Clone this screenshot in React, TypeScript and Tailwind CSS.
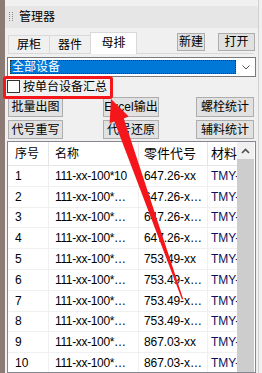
import React from "react";

const rows = [
  ["1", "111-xx-100*10", "647.26-xx"],
  ["2", "111-xx-100*…", "647.26-x…"],
  ["3", "111-xx-100*…", "647.26-x…"],
  ["4", "111-xx-100*…", "647.26-x…"],
  ["5", "111-xx-100*…", "753.49-xx"],
  ["6", "111-xx-100*…", "753.49-x…"],
  ["7", "111-xx-100*…", "753.49-x…"],
  ["8", "111-xx-100*…", "753.49-x…"],
  ["9", "111-xx-100*…", "867.03-xx"],
  ["10", "111-xx-100*…", "867.03-x…"],
];

const btn =
  "h-full flex items-center justify-center bg-[#e1e1e1] border border-[#adadad] leading-none";

function Tab({ label, active }: { label: string; active?: boolean }) {
  if (active) {
    return (
      <div className="h-[22px] -mb-px w-[47px] bg-white border border-b-0 border-[#d9d9d9] flex items-center justify-center pb-[2px]">
        {label}
      </div>
    );
  }
  return (
    <div className="h-[18px] w-[41px] bg-[#f0f0f0] border-t border-l border-[#d9d9d9] flex items-center justify-center">
      {label}
    </div>
  );
}

export default function App() {
  return (
    <div className="relative w-[262px] h-[373px] overflow-hidden bg-[#f0f0f0] flex text-[12px] text-black font-['Liberation_Sans','Noto_Sans_CJK_SC',sans-serif]">
      {/* left window edge */}
      <div className="w-[5px] shrink-0 bg-[#8c7b74]" />

      <div className="w-[253px] shrink-0 flex flex-col">
        {/* title bar */}
        <div className="mt-[6px] h-[22px] bg-[#e6e6e6] rounded-tr-[3px] flex items-center">
          <svg width="4" height="10" className="ml-[4px]" viewBox="0 0 4 10">
            {[0, 2, 4, 6, 8].map((y) => (
              <React.Fragment key={y}>
                <rect x="0" y={y} width="1" height="1" fill="#8a8a8a" />
                <rect x="3" y={y} width="1" height="1" fill="#8a8a8a" />
              </React.Fragment>
            ))}
          </svg>
          <span className="ml-[6px]">管理器</span>
        </div>

        {/* tabs + new/open */}
        <div className="mt-[4px] ml-[3px] w-[246px] h-[22px] flex items-end border-b border-[#d9d9d9]">
          <Tab label="屏柜" />
          <Tab label="器件" />
          <Tab label="母排" active />
          <div className="ml-auto self-start mt-[1px] h-[18px] flex">
            <div className={`${btn} w-[28px]`}>新建</div>
            <div className={`${btn} w-[37px] ml-[13px] -mr-px`}>打开</div>
          </div>
        </div>

        {/* combo */}
        <div className="mt-[3px] ml-[2px] w-[249px] h-[20px] bg-white border border-[#7a7a7a] flex items-center">
          <div className="ml-[2px] w-[226px] h-[14px] bg-[#0078d7] border border-dotted border-[#3a2a10] text-white flex items-center pl-px leading-none">
            全部设备
          </div>
          <svg width="8" height="5" viewBox="0 0 8 5" className="ml-auto mr-[5px]">
            <path d="M0.5 0.5 L4 4 L7.5 0.5" fill="none" stroke="#555" strokeWidth="1" />
          </svg>
        </div>

        {/* checkbox */}
        <div className="mt-[3px] ml-[2px] h-[13px] flex items-center">
          <div className="w-[13px] h-[13px] bg-white border border-[#333]" />
          <span className="ml-[3px] leading-none">按单台设备汇总</span>
        </div>

        {/* action buttons */}
        <div className="mt-[4px] h-[20px] flex">
          <div className={`${btn} ml-[3px] w-[55px]`}>批量出图</div>
          <div className={`${btn} ml-[40px] w-[56px]`}>Excel输出</div>
          <div className={`${btn} ml-[37px] w-[58px]`}>螺栓统计</div>
        </div>
        <div className="mt-[3px] h-[19px] flex">
          <div className={`${btn} ml-[3px] w-[55px]`}>代号重写</div>
          <div className={`${btn} ml-[40px] w-[56px]`}>代号还原</div>
          <div className={`${btn} ml-[37px] w-[58px]`}>辅料统计</div>
        </div>

        {/* list */}
        <div className="mt-[2px] ml-[2px] w-[249px] flex-1 bg-white border border-[#828790] flex overflow-hidden">
          <div className="w-[229px] shrink-0 overflow-hidden">
            <div className="grid grid-cols-[41px_90px_69px_29px] h-[24px] border-b border-[#e5e5e5]">
              <div className="pl-[7px] flex items-center border-r border-[#e5e5e5]">序号</div>
              <div className="pl-[6px] flex items-center border-r border-[#e5e5e5]">名称</div>
              <div className="pl-[5px] flex items-center border-r border-[#e5e5e5] text-[13px]">零件代号</div>
              <div className="pl-[3px] flex items-center overflow-hidden whitespace-nowrap text-[13px]">材料</div>
            </div>
            {rows.map((r) => (
              <div
                key={r[0]}
                className="grid grid-cols-[41px_90px_69px_29px] h-[20.8px] border-b border-[#f0f0f0]"
              >
                <div className="pl-[7px] flex items-center border-r border-[#f0f0f0]">{r[0]}</div>
                <div className="pl-[6px] flex items-center border-r border-[#f0f0f0] whitespace-nowrap tracking-[-0.35px]">
                  {r[1]}
                </div>
                <div className="pl-[5px] flex items-center border-r border-[#f0f0f0] whitespace-nowrap tracking-[-0.1px]">
                  {r[2]}
                </div>
                <div className="pl-[3px] flex items-center overflow-hidden whitespace-nowrap text-[#10105a]">
                  TMY-80*8
                </div>
              </div>
            ))}
          </div>
          <div className="w-[17px] shrink-0 flex flex-col">
            <div className="h-[17px] bg-[#f0f0f0] flex items-center justify-center">
              <svg width="9" height="6" viewBox="0 0 9 6">
                <path d="M1 5 L4.5 1.5 L8 5" fill="none" stroke="#505050" strokeWidth="1.6" />
              </svg>
            </div>
            <div className="flex-1 bg-[#cdcdcd]" />
          </div>
        </div>
      </div>

      {/* right window edge */}
      <div className="w-px shrink-0 bg-[#d0d0d0]" />

      {/* annotation: red box + arrow */}
      <div className="absolute left-[3px] top-[76px] w-[110px] h-[23px] border-[3px] border-[#f5161b] rounded-[3px] pointer-events-none" />
      <svg
        className="absolute left-0 top-0 pointer-events-none"
        width="262"
        height="373"
        viewBox="0 0 262 373"
      >
        <polygon
          points="111,99 128.7,116.5 123.8,118.4 183.2,299 182,299.4 114.4,121.6 109.6,123.2"
          fill="#f5161b"
        />
      </svg>
    </div>
  );
}
